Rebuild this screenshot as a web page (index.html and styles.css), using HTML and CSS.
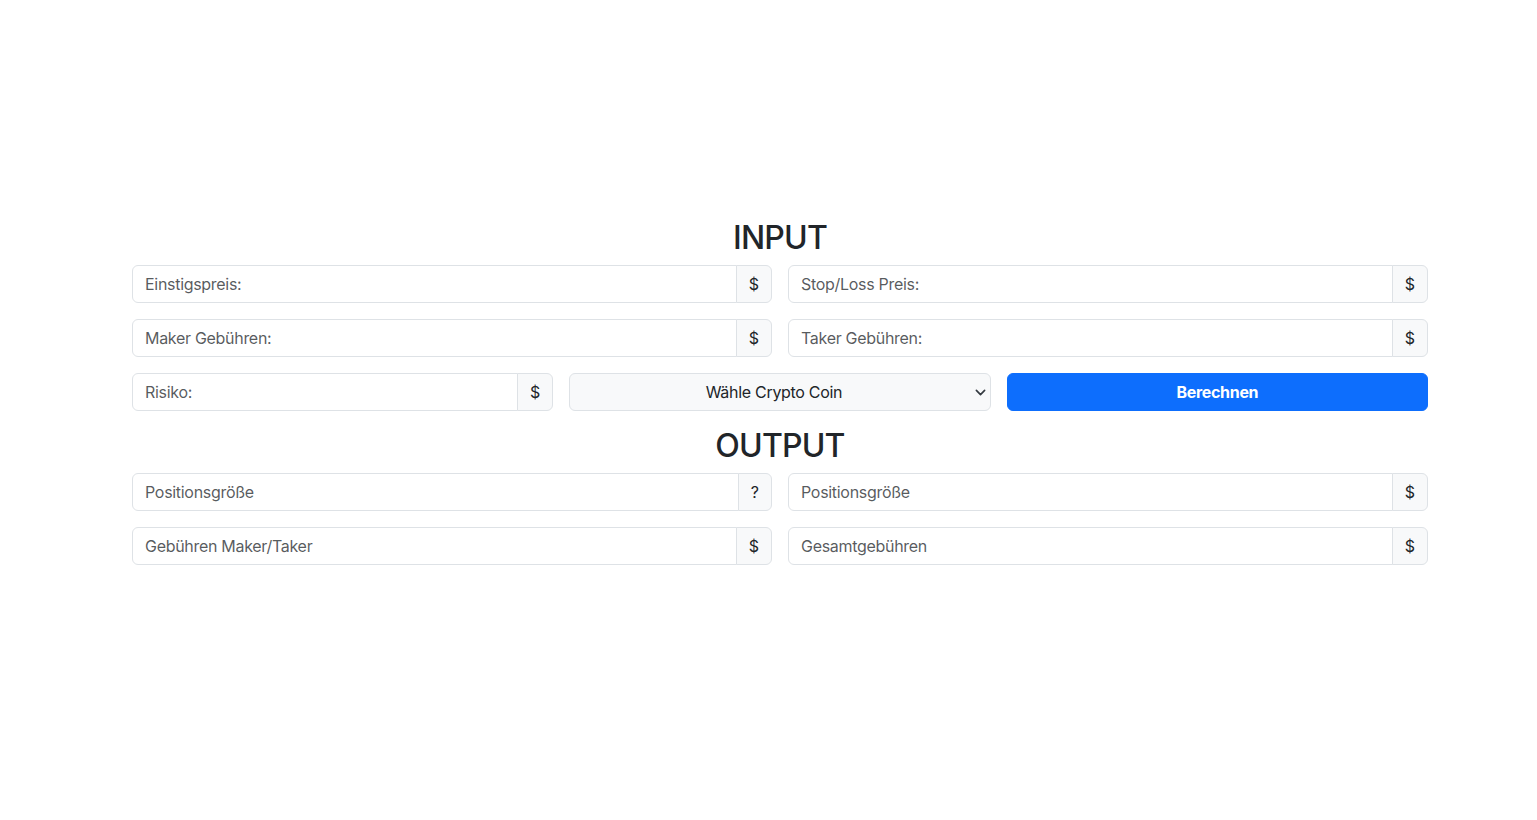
FILE: index.html
```html
<!DOCTYPE html>
<html lang="de">
<head>
<meta charset="utf-8">
<title>Crypto Rechner</title>
<link rel="stylesheet" href="styles.css">
</head>
<body>
<main class="wrap">
  <h2 class="title">INPUT</h2>
  <div class="row two">
    <div class="igroup"><input class="field" placeholder="Einstigspreis:"><span class="addon">$</span></div>
    <div class="igroup"><input class="field" placeholder="Stop/Loss Preis:"><span class="addon">$</span></div>
  </div>
  <div class="row two">
    <div class="igroup"><input class="field" placeholder="Maker Gebühren:"><span class="addon">$</span></div>
    <div class="igroup"><input class="field" placeholder="Taker Gebühren:"><span class="addon">$</span></div>
  </div>
  <div class="row three">
    <div class="igroup"><input class="field" placeholder="Risiko:"><span class="addon">$</span></div>
    <div class="selwrap">
      <select class="sel"><option>Wähle Crypto Coin</option></select>
      <svg class="chev" width="11" height="11" viewBox="0 0 16 16"><path d="M2 5l6 6 6-6" fill="none" stroke="#343a40" stroke-width="2.4" stroke-linecap="round" stroke-linejoin="round"/></svg>
    </div>
    <button class="btn">Berechnen</button>
  </div>
  <h2 class="title">OUTPUT</h2>
  <div class="row two">
    <div class="igroup"><input class="field" placeholder="Positionsgröße" readonly><span class="addon q">?</span></div>
    <div class="igroup"><input class="field" placeholder="Positionsgröße" readonly><span class="addon">$</span></div>
  </div>
  <div class="row two">
    <div class="igroup"><input class="field" placeholder="Gebühren Maker/Taker" readonly><span class="addon">$</span></div>
    <div class="igroup"><input class="field" placeholder="Gesamtgebühren" readonly><span class="addon">$</span></div>
  </div>
</main>
</body>
</html>
```

FILE: styles.css
```css
html, body {
  margin: 0;
  padding: 0;
  background: #fff;
  font-family: Inter, "Noto Sans", "Liberation Sans", sans-serif;
  font-size: 16px;
  color: #212529;
}

.wrap {
  width: 1296px;
  margin: 0 0 0 132px;
  padding-top: 219px;
}

.title {
  margin: 0 0 8px;
  font-size: 32px;
  font-weight: 500;
  line-height: 38px;
  letter-spacing: -0.8px;
  text-align: center;
  color: #212529;
}

.row {
  display: grid;
  gap: 16px;
  margin-bottom: 16px;
}
.row.two { grid-template-columns: 1fr 1fr; }
.row.three { grid-template-columns: 1fr 1fr 1fr; }

.igroup {
  display: flex;
  height: 38px;
}

.field {
  flex: 1;
  min-width: 0;
  box-sizing: border-box;
  height: 38px;
  margin: 0;
  padding: 6px 12px;
  font: inherit;
  font-size: 16px;
  letter-spacing: -0.3px;
  color: #212529;
  background: #fff;
  border: 1px solid #dee2e6;
  border-radius: 6px 0 0 6px;
  outline: none;
}
.field::placeholder { color: rgba(33, 37, 41, 0.75); }

.addon {
  display: flex;
  align-items: center;
  box-sizing: border-box;
  padding: 6px 12px;
  height: 38px;
  margin-left: -1px;
  background: #f8f9fa;
  border: 1px solid #dee2e6;
  border-radius: 0 6px 6px 0;
  color: #212529;
  font-size: 16px;
}

.selwrap {
  position: relative;
  height: 38px;
}
.sel {
  -webkit-appearance: none;
  appearance: none;
  width: 100%;
  height: 38px;
  box-sizing: border-box;
  margin: 0;
  padding: 6px 24px 6px 12px;
  font: inherit;
  font-size: 16px;
  letter-spacing: -0.3px;
  color: #212529;
  background: #f8f9fa;
  border: 1px solid #dee2e6;
  border-radius: 6px;
  text-align: center;
  text-align-last: center;
}
.chev {
  position: absolute;
  right: 5px;
  top: 14px;
  pointer-events: none;
}

.btn {
  height: 38px;
  margin: 0;
  padding: 6px 12px;
  font: inherit;
  font-size: 16px;
  font-weight: 700;
  letter-spacing: -0.3px;
  color: #fff;
  background: #0d6efd;
  border: 1px solid #0d6efd;
  border-radius: 6px;
  cursor: pointer;
}
```
